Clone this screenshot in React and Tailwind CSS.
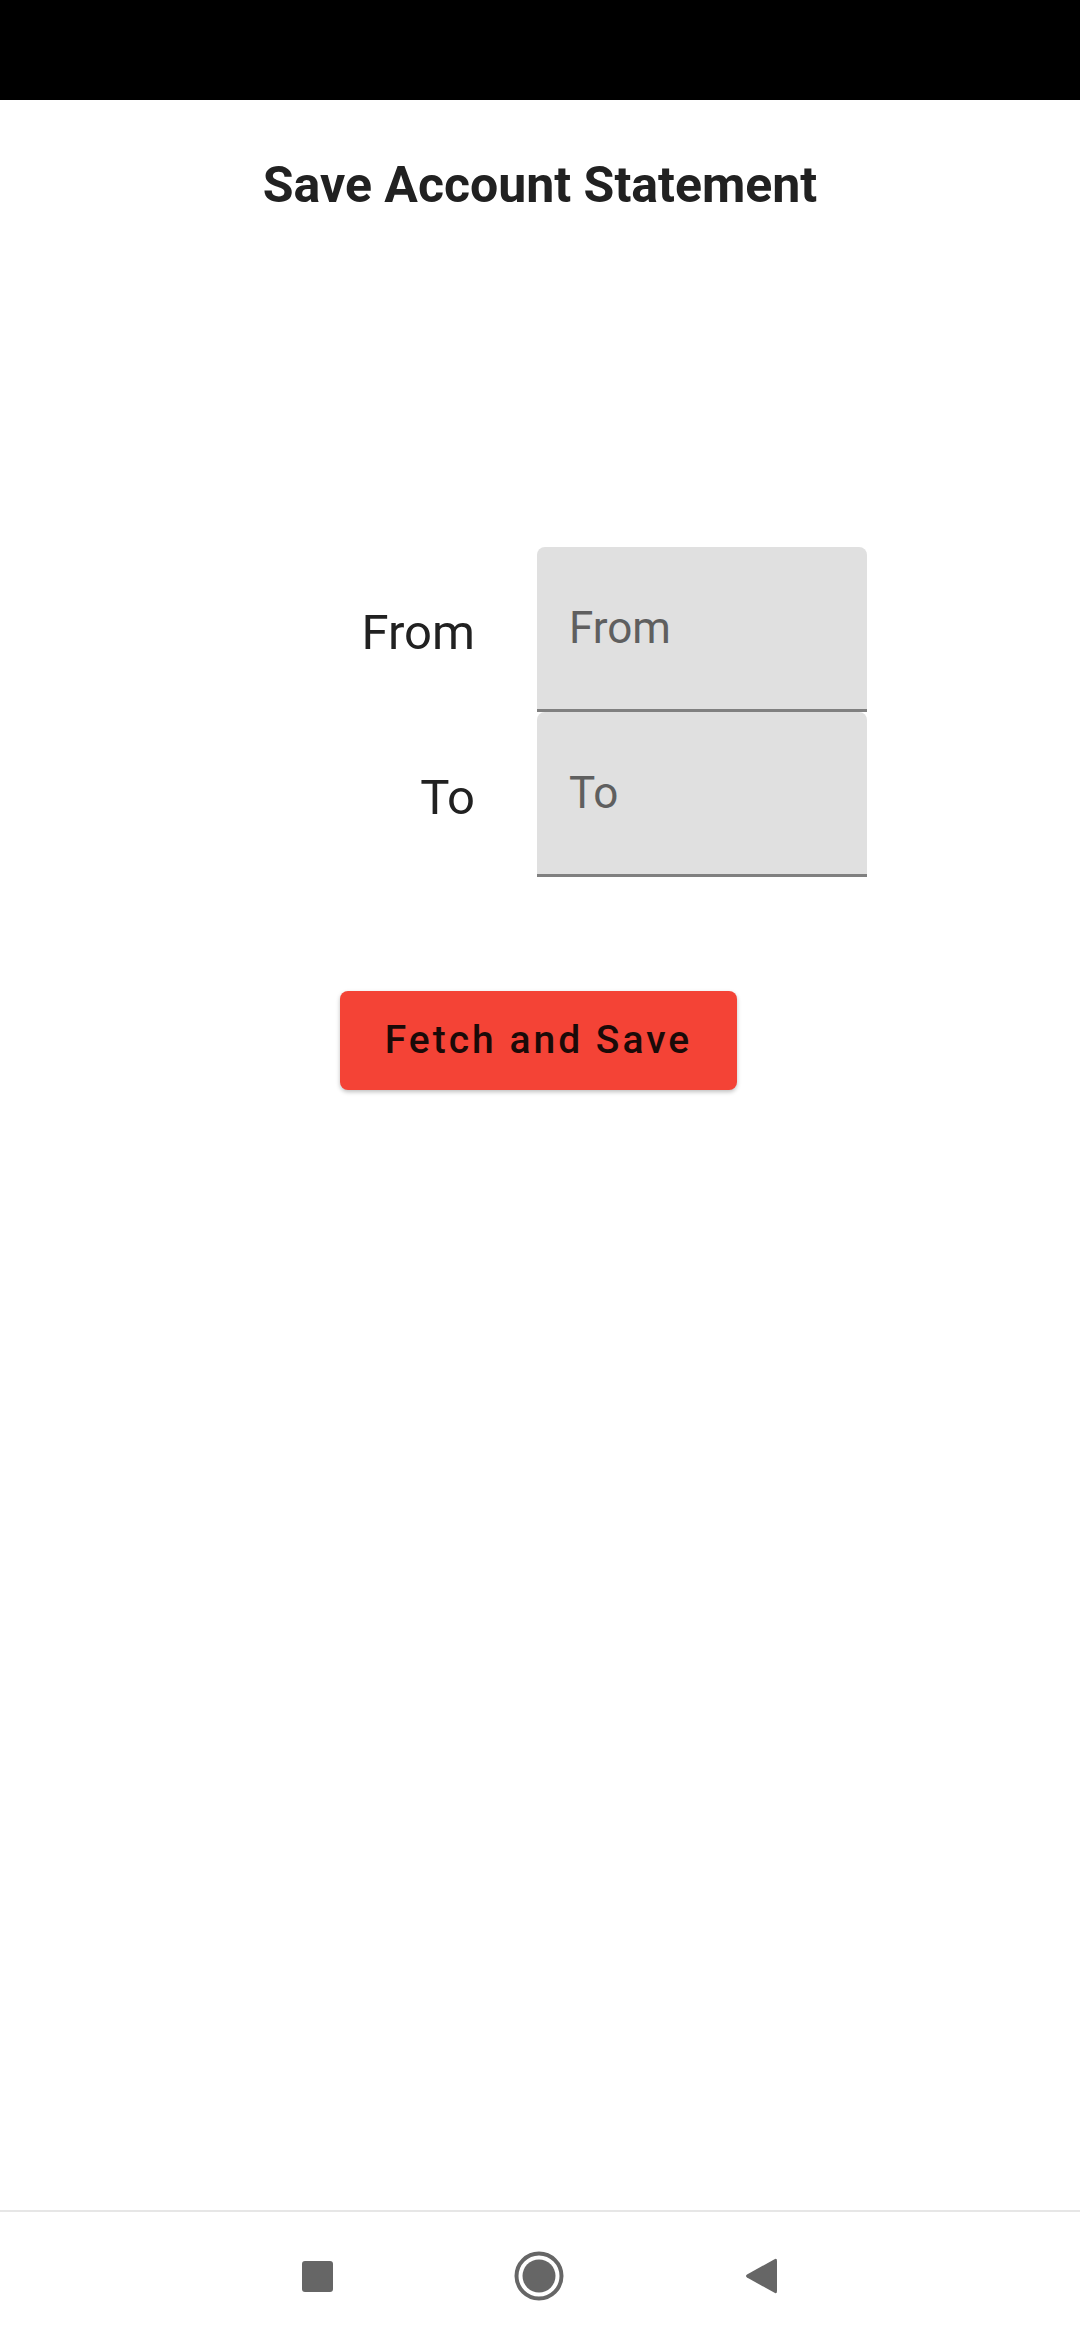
import React from 'react';

function DateField({ label, placeholder }) {
  return (
    <div className="flex items-center">
      <div className="w-[475px] pt-[5px] text-right text-[49px] leading-[49px] text-[#212121]">
        {label}
      </div>
      <div className="ml-[62px] h-[165px] w-[330px] rounded-t-[8px] border-b-[3px] border-[#808080] bg-[#e0e0e0] pl-[32px] pt-[59px]">
        <span className="text-[44px] leading-[44px] text-[#5f5f5f]">{placeholder}</span>
      </div>
    </div>
  );
}

export default function App() {
  return (
    <div className="flex min-h-[2340px] w-[1080px] flex-col bg-white font-['Roboto',sans-serif]">
      {/* Status bar */}
      <div className="h-[100px] bg-black" />

      {/* Title */}
      <h1 className="mt-[60px] text-center text-[50px] font-bold leading-[50px] text-[#212121]">
        Save Account Statement
      </h1>

      {/* Date inputs */}
      <div className="mt-[337px] flex flex-col">
        <DateField label="From" placeholder="From" />
        <DateField label="To" placeholder="To" />
      </div>

      {/* Action */}
      <div className="mt-[114px] flex justify-center">
        <button className="ml-[-3px] h-[99px] w-[397px] rounded-[8px] bg-[#f44336] text-[39px] font-medium tracking-[3px] text-[#1a0a08] shadow-[0_2px_4px_rgba(0,0,0,0.25)]">
          Fetch and Save
        </button>
      </div>

      <div className="flex-1" />

      {/* Navigation bar */}
      <div className="flex h-[130px] items-center justify-center border-t-[2px] border-[#e6e6e6] bg-white">
        <div className="flex w-[476px] items-center justify-between">
          <div className="h-[31px] w-[31px] rounded-[3px] bg-[#666666]" />
          <svg width="50" height="50" viewBox="0 0 50 50">
            <circle cx="25" cy="25" r="22.5" fill="none" stroke="#666666" strokeWidth="4" />
            <circle cx="25" cy="25" r="16.5" fill="#666666" />
          </svg>
          <svg width="34" height="38" viewBox="0 0 34 38">
            <path d="M31 2 Q33 1 33 4 L33 34 Q33 37 31 36 L3 20.5 Q1 19 3 17.5 Z" fill="#666666" />
          </svg>
        </div>
      </div>
    </div>
  );
}
